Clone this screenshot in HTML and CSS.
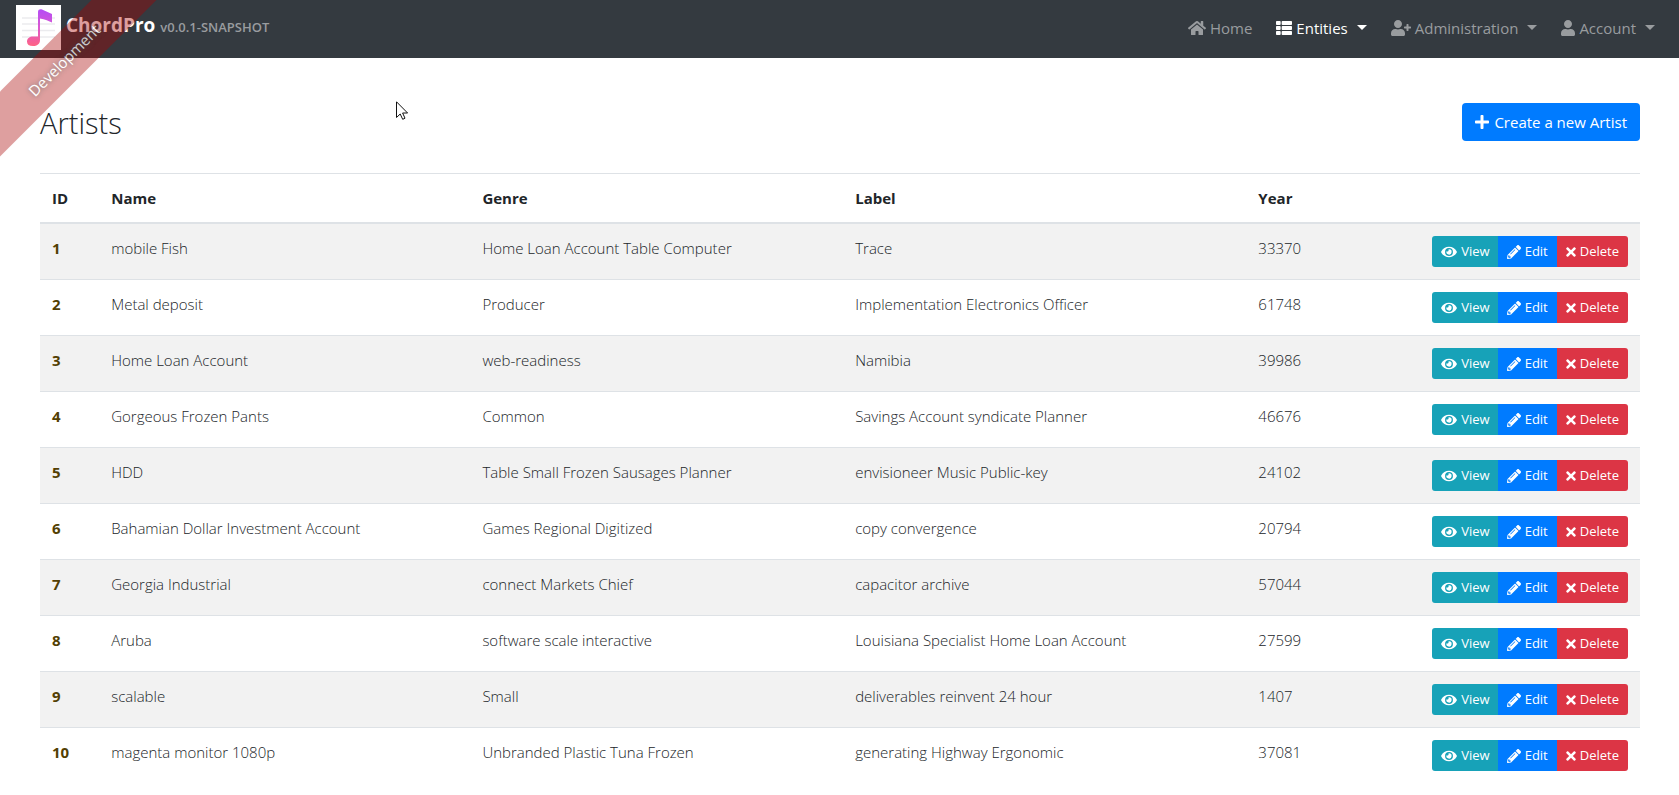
FILE: index.html
```html
<!DOCTYPE html>
<html lang="en">
<head>
<meta charset="utf-8">
<title>Artists</title>
<link rel="stylesheet" href="styles.css">
</head>
<body>
<svg class="sprite" aria-hidden="true">
  <symbol id="home" viewBox="0 0 576 512"><path d="M280.37 148.26L96 300.11V464a16 16 0 0 0 16 16l112.06-.29a16 16 0 0 0 15.92-16V368a16 16 0 0 1 16-16h64a16 16 0 0 1 16 16v95.64a16 16 0 0 0 16 16.05L464 480a16 16 0 0 0 16-16V300L295.67 148.26a12.19 12.19 0 0 0-15.3 0zM571.6 251.47L488 182.56V44.05a12 12 0 0 0-12-12h-56a12 12 0 0 0-12 12v72.61L318.47 43a48 48 0 0 0-61 0L4.34 251.47a12 12 0 0 0-1.6 16.9l25.5 31A12 12 0 0 0 45.15 301l235.22-193.74a12.19 12.19 0 0 1 15.3 0L530.9 301a12 12 0 0 0 16.9-1.6l25.5-31a12 12 0 0 0-1.7-16.93z"/></symbol>
  <symbol id="list" viewBox="0 0 512 512"><path d="M149.333 216v80c0 13.255-10.745 24-24 24H24c-13.255 0-24-10.745-24-24v-80c0-13.255 10.745-24 24-24h101.333c13.255 0 24 10.745 24 24zM0 376v80c0 13.255 10.745 24 24 24h101.333c13.255 0 24-10.745 24-24v-80c0-13.255-10.745-24-24-24H24c-13.255 0-24 10.745-24 24zM125.333 32H24C10.745 32 0 42.745 0 56v80c0 13.255 10.745 24 24 24h101.333c13.255 0 24-10.745 24-24V56c0-13.255-10.745-24-24-24zm80 448H488c13.255 0 24-10.745 24-24v-80c0-13.255-10.745-24-24-24H205.333c-13.255 0-24 10.745-24 24v80c0 13.255 10.745 24 24 24zm-24-424v80c0 13.255 10.745 24 24 24H488c13.255 0 24-10.745 24-24V56c0-13.255-10.745-24-24-24H205.333c-13.255 0-24 10.745-24 24zm24 264H488c13.255 0 24-10.745 24-24v-80c0-13.255-10.745-24-24-24H205.333c-13.255 0-24 10.745-24 24v80c0 13.255 10.745 24 24 24z"/></symbol>
  <symbol id="user-plus" viewBox="0 0 640 512"><path d="M624 208h-64v-64c0-8.8-7.2-16-16-16h-32c-8.8 0-16 7.2-16 16v64h-64c-8.8 0-16 7.2-16 16v32c0 8.8 7.2 16 16 16h64v64c0 8.8 7.2 16 16 16h32c8.8 0 16-7.2 16-16v-64h64c8.8 0 16-7.2 16-16v-32c0-8.8-7.2-16-16-16zm-400 48c70.7 0 128-57.3 128-128S294.7 0 224 0 96 57.3 96 128s57.3 128 128 128zm89.6 32h-16.7c-22.2 10.2-46.9 16-72.9 16s-50.6-5.8-72.9-16h-16.7C60.2 288 0 348.2 0 422.4V464c0 26.5 21.5 48 48 48h352c26.5 0 48-21.5 48-48v-41.6c0-74.2-60.2-134.4-134.4-134.4z"/></symbol>
  <symbol id="user" viewBox="0 0 448 512"><path d="M224 256c70.7 0 128-57.3 128-128S294.7 0 224 0 96 57.3 96 128s57.3 128 128 128zm89.6 32h-16.7c-22.2 10.2-46.9 16-72.9 16s-50.6-5.8-72.9-16h-16.7C60.2 288 0 348.2 0 422.4V464c0 26.5 21.5 48 48 48h352c26.5 0 48-21.5 48-48v-41.6c0-74.2-60.2-134.4-134.4-134.4z"/></symbol>
  <symbol id="plus" viewBox="0 0 448 512"><path d="M416 208H272V64c0-17.67-14.33-32-32-32h-32c-17.67 0-32 14.33-32 32v144H32c-17.67 0-32 14.33-32 32v32c0 17.67 14.33 32 32 32h144v144c0 17.67 14.33 32 32 32h32c17.67 0 32-14.33 32-32V304h144c17.67 0 32-14.33 32-32v-32c0-17.67-14.33-32-32-32z"/></symbol>
  <symbol id="eye" viewBox="0 0 576 512"><path d="M572.52 241.4C518.29 135.59 410.93 64 288 64S57.68 135.64 3.48 241.41a32.35 32.35 0 0 0 0 29.19C57.71 376.41 165.07 448 288 448s230.32-71.64 284.52-177.41a32.35 32.35 0 0 0 0-29.19zM288 400a144 144 0 1 1 144-144 143.93 143.93 0 0 1-144 144zm0-240a95.31 95.31 0 0 0-25.31 3.79 47.85 47.85 0 0 1-66.9 66.9A95.78 95.78 0 1 0 288 160z"/></symbol>
  <symbol id="pencil" viewBox="0 0 512 512"><path d="M497.9 142.1l-46.1 46.1c-4.7 4.7-12.3 4.7-17 0l-111-111c-4.7-4.7-4.7-12.3 0-17l46.1-46.1c18.7-18.7 49.1-18.7 67.9 0l60.1 60.1c18.8 18.7 18.8 49.1 0 67.9zM284.2 99.8L21.6 362.4.4 483.9c-2.9 16.4 11.4 30.6 27.8 27.8l121.5-21.3 262.6-262.6c4.7-4.7 4.7-12.3 0-17l-111-111c-4.8-4.7-12.4-4.7-17.1 0zM124.1 339.9c-5.5-5.5-5.5-14.3 0-19.8l154-154c5.5-5.5 14.3-5.5 19.8 0s5.5 14.3 0 19.8l-154 154c-5.5 5.5-14.3 5.5-19.8 0zM88 424h48v36.3l-64.5 11.3-31.1-31.1L51.7 376H88v48z"/></symbol>
  <symbol id="times" viewBox="0 0 352 512"><path d="M242.72 256l100.07-100.07c12.28-12.28 12.28-32.19 0-44.48l-22.24-22.24c-12.28-12.28-32.19-12.28-44.48 0L176 189.28 75.93 89.21c-12.28-12.28-32.19-12.28-44.48 0L9.21 111.45c-12.28 12.28-12.28 32.19 0 44.48L109.28 256 9.21 356.07c-12.28 12.28-12.28 32.19 0 44.48l22.24 22.24c12.28 12.28 32.2 12.28 44.48 0L176 322.72l100.07 100.07c12.28 12.28 32.2 12.28 44.48 0l22.24-22.24c12.28-12.28 12.28-32.19 0-44.48L242.72 256z"/></symbol>
</svg>

<div class="ribbon"><a href="#">Development</a></div>

<header class="navbar">
  <a class="brand" href="#">
    <svg class="logo" viewBox="0 0 45 45" aria-hidden="true">
      <defs><linearGradient id="note" x1="0" y1="0" x2="0" y2="1"><stop offset="0" stop-color="#b44cf6"/><stop offset=".5" stop-color="#dc58cf"/><stop offset="1" stop-color="#ff6384"/></linearGradient></defs>
      <rect width="45" height="45" fill="#fff"/>
      <path d="M6 13h33M6 19h33M6 25.500h33M6 32h33" stroke="#ebebee" stroke-width="1.500"/>
      <path d="M22 7c0-2.500 2-3 4-2.500L36 9v8.500c-3-1-7-3.500-12-4V35c0 4-3 6-7 6-4 0-6-1.500-6-4.500s2.500-5 6-5h5z" fill="url(#note)"/>
    </svg>
    <span class="brand-text"><span class="brand-name">ChordPro</span><span class="version">v0.0.1-SNAPSHOT</span></span>
  </a>
  <nav class="menu">
    <a class="item" href="#"><svg class="icon w18"><use href="#home"/></svg><span>Home</span></a>
    <a class="item active drop" href="#"><svg class="icon w16"><use href="#list"/></svg><span>Entities</span></a>
    <a class="item drop" href="#"><svg class="icon w20"><use href="#user-plus"/></svg><span>Administration</span></a>
    <a class="item drop" href="#"><svg class="icon w14"><use href="#user"/></svg><span>Account</span></a>
  </nav>
</header>

<main class="content">
  <div class="heading">
    <h1>Artists</h1>
    <button class="create" type="button"><svg class="icon w14"><use href="#plus"/></svg><span>Create a new Artist</span></button>
  </div>
  <table class="artists">
    <colgroup><col class="c-id"><col class="c-name"><col class="c-genre"><col class="c-label"><col class="c-year"><col></colgroup>
    <thead><tr><th>ID</th><th>Name</th><th>Genre</th><th>Label</th><th>Year</th><th></th></tr></thead>
    <tbody>
      <tr><td><a class="id" href="#">1</a></td><td>mobile Fish</td><td>Home Loan Account Table Computer</td><td>Trace</td><td>33370</td><td><div class="actions"><button class="view" type="button"><svg class="icon"><use href="#eye"/></svg>View</button><button class="edit" type="button"><svg class="icon"><use href="#pencil"/></svg>Edit</button><button class="delete" type="button"><svg class="icon"><use href="#times"/></svg>Delete</button></div></td></tr>
      <tr><td><a class="id" href="#">2</a></td><td>Metal deposit</td><td>Producer</td><td>Implementation Electronics Officer</td><td>61748</td><td><div class="actions"><button class="view" type="button"><svg class="icon"><use href="#eye"/></svg>View</button><button class="edit" type="button"><svg class="icon"><use href="#pencil"/></svg>Edit</button><button class="delete" type="button"><svg class="icon"><use href="#times"/></svg>Delete</button></div></td></tr>
      <tr><td><a class="id" href="#">3</a></td><td>Home Loan Account</td><td>web-readiness</td><td>Namibia</td><td>39986</td><td><div class="actions"><button class="view" type="button"><svg class="icon"><use href="#eye"/></svg>View</button><button class="edit" type="button"><svg class="icon"><use href="#pencil"/></svg>Edit</button><button class="delete" type="button"><svg class="icon"><use href="#times"/></svg>Delete</button></div></td></tr>
      <tr><td><a class="id" href="#">4</a></td><td>Gorgeous Frozen Pants</td><td>Common</td><td>Savings Account syndicate Planner</td><td>46676</td><td><div class="actions"><button class="view" type="button"><svg class="icon"><use href="#eye"/></svg>View</button><button class="edit" type="button"><svg class="icon"><use href="#pencil"/></svg>Edit</button><button class="delete" type="button"><svg class="icon"><use href="#times"/></svg>Delete</button></div></td></tr>
      <tr><td><a class="id" href="#">5</a></td><td>HDD</td><td>Table Small Frozen Sausages Planner</td><td>envisioneer Music Public-key</td><td>24102</td><td><div class="actions"><button class="view" type="button"><svg class="icon"><use href="#eye"/></svg>View</button><button class="edit" type="button"><svg class="icon"><use href="#pencil"/></svg>Edit</button><button class="delete" type="button"><svg class="icon"><use href="#times"/></svg>Delete</button></div></td></tr>
      <tr><td><a class="id" href="#">6</a></td><td>Bahamian Dollar Investment Account</td><td>Games Regional Digitized</td><td>copy convergence</td><td>20794</td><td><div class="actions"><button class="view" type="button"><svg class="icon"><use href="#eye"/></svg>View</button><button class="edit" type="button"><svg class="icon"><use href="#pencil"/></svg>Edit</button><button class="delete" type="button"><svg class="icon"><use href="#times"/></svg>Delete</button></div></td></tr>
      <tr><td><a class="id" href="#">7</a></td><td>Georgia Industrial</td><td>connect Markets Chief</td><td>capacitor archive</td><td>57044</td><td><div class="actions"><button class="view" type="button"><svg class="icon"><use href="#eye"/></svg>View</button><button class="edit" type="button"><svg class="icon"><use href="#pencil"/></svg>Edit</button><button class="delete" type="button"><svg class="icon"><use href="#times"/></svg>Delete</button></div></td></tr>
      <tr><td><a class="id" href="#">8</a></td><td>Aruba</td><td>software scale interactive</td><td>Louisiana Specialist Home Loan Account</td><td>27599</td><td><div class="actions"><button class="view" type="button"><svg class="icon"><use href="#eye"/></svg>View</button><button class="edit" type="button"><svg class="icon"><use href="#pencil"/></svg>Edit</button><button class="delete" type="button"><svg class="icon"><use href="#times"/></svg>Delete</button></div></td></tr>
      <tr><td><a class="id" href="#">9</a></td><td>scalable</td><td>Small</td><td>deliverables reinvent 24 hour</td><td>1407</td><td><div class="actions"><button class="view" type="button"><svg class="icon"><use href="#eye"/></svg>View</button><button class="edit" type="button"><svg class="icon"><use href="#pencil"/></svg>Edit</button><button class="delete" type="button"><svg class="icon"><use href="#times"/></svg>Delete</button></div></td></tr>
      <tr><td><a class="id" href="#">10</a></td><td>magenta monitor 1080p</td><td>Unbranded Plastic Tuna Frozen</td><td>generating Highway Ergonomic</td><td>37081</td><td><div class="actions"><button class="view" type="button"><svg class="icon"><use href="#eye"/></svg>View</button><button class="edit" type="button"><svg class="icon"><use href="#pencil"/></svg>Edit</button><button class="delete" type="button"><svg class="icon"><use href="#times"/></svg>Delete</button></div></td></tr>
    </tbody>
  </table>
</main>

<svg class="cursor" viewBox="0 0 12 19" aria-hidden="true"><path d="M.5 .8V16.500L4.200 13l2.500 5.300 2.300-1.100L6.600 12h5z" fill="#fff" stroke="#111" stroke-width="1"/></svg>
</body>
</html>
```
FILE: styles.css
```css
* { box-sizing: border-box; }

body {
  margin: 0;
  background: #fff;
  color: #212529;
  font-family: "Open Sans", "Noto Sans", sans-serif;
  font-size: 15px;
  line-height: 24px;
}

a { color: inherit; text-decoration: none; }
button { font: inherit; color: #fff; border: 0; cursor: pointer; }

.sprite { position: absolute; width: 0; height: 0; }
.icon { height: 16px; fill: currentColor; flex: none; }
.w14 { width: 14px; }
.w16 { width: 16px; }
.w18 { width: 18px; }
.w20 { width: 20px; }

.ribbon {
  position: absolute;
  top: 37px;
  left: -56px;
  z-index: 10;
  width: 240px;
  overflow: hidden;
  background: rgba(170, 0, 0, 0.5);
  opacity: 0.75;
  transform: rotate(-45deg);
  white-space: nowrap;
  pointer-events: none;
}
.ribbon a {
  display: block;
  margin: 1px 0;
  padding: 10px 48px;
  color: #fff;
  text-align: center;
  text-shadow: 0 0 5px #444;
}

.navbar {
  display: flex;
  justify-content: space-between;
  align-items: center;
  padding: 5px 16px 8px;
  background: #343a40;
}
.brand { display: flex; align-items: center; color: #fff; font-weight: 700; }
.logo { width: 45px; height: 45px; margin-right: 5px; }
.brand-text { display: flex; align-items: baseline; gap: 5px; padding-bottom: 4px; }
.brand-name { font-size: 19px; }
.version { font-size: 13px; font-weight: 600; color: #999c9f; }

.menu { display: flex; gap: 8px; }
.item {
  display: flex;
  align-items: center;
  gap: 4px;
  padding: 0 8px;
  color: #999c9f;
}
.item.active { color: #fff; }
.drop::after {
  content: "";
  margin-left: 5px;
  border: 5px solid transparent;
  border-top-color: currentColor;
  border-bottom: 0;
}

.content { padding: 45px 39px 10px 40px; }
.heading {
  display: flex;
  justify-content: space-between;
  align-items: center;
  margin-bottom: 32px;
}
.heading h1 { margin: 0; padding-top: 2px; font-size: 29px; font-weight: 300; line-height: 36px; }
.create {
  display: flex;
  align-items: center;
  gap: 5px;
  padding: 7px 13px;
  border-radius: 4px;
  background: #007bff;
}

.artists { width: 100%; table-layout: fixed; border-spacing: 0; }
.c-id { width: 3.7%; }
.c-name { width: 23.2%; }
.c-genre { width: 23.3%; }
.c-label { width: 25.2%; }
.c-year { width: 10%; }
.artists th {
  padding: 12px;
  border-top: 1px solid #dee2e6;
  border-bottom: 2px solid #dee2e6;
  text-align: left;
  font-weight: 700;
}
.artists td {
  padding: 12px;
  border-bottom: 1px solid #dee2e6;
  vertical-align: top;
  font-weight: 300;
}
.artists tr:last-child td { border-bottom: 0; }
.artists tbody tr:nth-child(odd) { background: #f2f2f2; }
.id { color: #533f03; font-weight: 700; }

.actions { display: flex; justify-content: flex-end; }
.actions button {
  display: flex;
  align-items: center;
  gap: 4px;
  padding: 5px 9px;
  font-size: 13px;
  font-weight: 400;
  line-height: 21px;
}
.actions .icon { height: 14px; }
.actions .view { padding-right: 8px; background: #17a2b8; border-radius: 3px 0 0 3px; }
.view .icon { width: 16px; }
.edit { background: #007bff; }
.edit .icon { width: 14px; }
.delete { background: #dc3545; border-radius: 0 3px 3px 0; }
.delete .icon { width: 10px; }

.cursor { position: absolute; left: 396px; top: 101px; width: 12px; height: 19px; }
```
